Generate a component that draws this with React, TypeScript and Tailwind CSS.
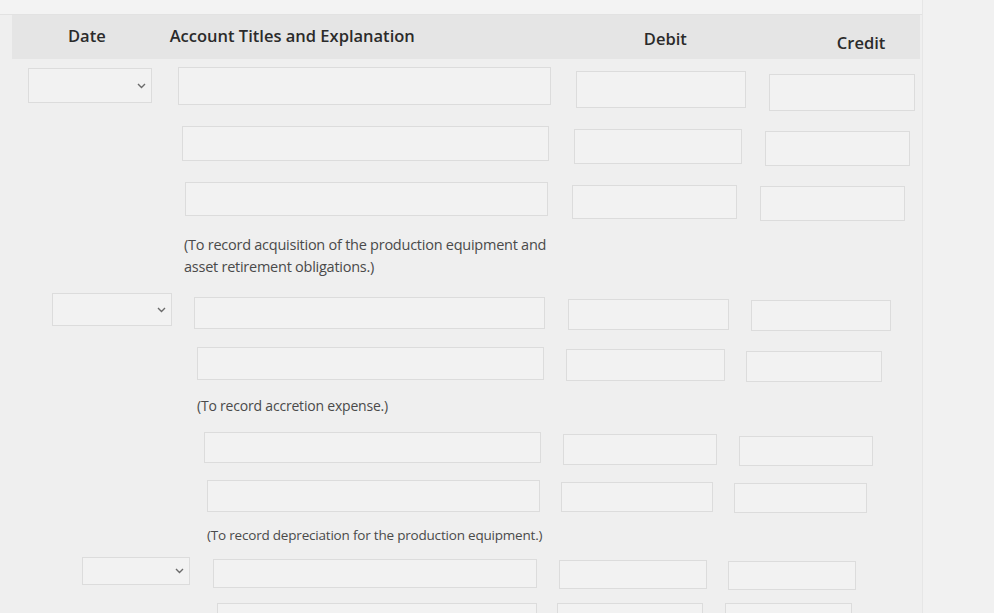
import React from "react";

const box = "border border-[#dcdcdc] bg-[#f2f2f2] shrink-0";

function Chevron() {
  return (
    <svg width="9" height="6" viewBox="0 0 9 6" className="shrink-0">
      <path d="M1 1 L4.5 4.5 L8 1" fill="none" stroke="#6b6b6b" strokeWidth="1.4" />
    </svg>
  );
}

export default function App() {
  return (
    <div
      className="w-[994px] h-[613px] overflow-hidden bg-[#efefef] relative"
      style={{ fontFamily: '"Open Sans", "Liberation Sans", sans-serif' }}
    >
      <div className="flex">
        <div className="w-[922px] shrink-0">
          {/* top strip */}
          <div className="h-[15px] bg-[#f3f3f3] border-b border-[#e2e2e2]" />
          {/* header bar */}
          <div className="ml-[12px] w-[908px] h-[44px] bg-[#e5e5e5] flex items-start text-[16.5px] font-semibold text-[#2b2b2b]">
            <div className="ml-[56px] mt-[9px]">Date</div>
            <div className="ml-[64px] mt-[9px]">Account Titles and Explanation</div>
            <div className="ml-[229px] mt-[12px]">Debit</div>
            <div className="ml-[150px] mt-[16px]">Credit</div>
          </div>

          {/* Row 1 */}
          <div className="flex items-start mt-[8px]">
            <div className={`${box} ml-[28px] w-[124px] h-[35px] mt-[1px] flex items-center justify-end pr-[5px]`}>
              <Chevron />
            </div>
            <div className={`${box} ml-[26px] w-[373px] h-[38px]`} />
            <div className={`${box} ml-[25px] w-[170px] h-[37px] mt-[4px]`} />
            <div className={`${box} ml-[23px] w-[146px] h-[37px] mt-[7px]`} />
          </div>

          {/* Row 2 */}
          <div className="flex items-start mt-[15px]">
            <div className={`${box} ml-[182px] w-[367px] h-[35px]`} />
            <div className={`${box} ml-[25px] w-[168px] h-[35px] mt-[3px]`} />
            <div className={`${box} ml-[23px] w-[145px] h-[35px] mt-[5px]`} />
          </div>

          {/* Row 3 */}
          <div className="flex items-start mt-[16px]">
            <div className={`${box} ml-[185px] w-[363px] h-[34px]`} />
            <div className={`${box} ml-[24px] w-[165px] h-[34px] mt-[3px]`} />
            <div className={`${box} ml-[23px] w-[145px] h-[35px] mt-[4px]`} />
          </div>

          <div className="ml-[184px] mt-[13px] w-[380px] text-[14.5px] leading-[22px] text-[#4a4a4a] tracking-[-0.25px]">
            (To record acquisition of the production equipment and
            <br />
            asset retirement obligations.)
          </div>

          {/* Row 4 */}
          <div className="flex items-start mt-[15px]">
            <div className={`${box} ml-[52px] w-[120px] h-[33px] flex items-center justify-end pr-[5px]`}>
              <Chevron />
            </div>
            <div className={`${box} ml-[22px] w-[351px] h-[32px] mt-[4px]`} />
            <div className={`${box} ml-[23px] w-[161px] h-[31px] mt-[6px]`} />
            <div className={`${box} ml-[22px] w-[140px] h-[31px] mt-[7px]`} />
          </div>

          {/* Row 5 */}
          <div className="flex items-start mt-[16px]">
            <div className={`${box} ml-[197px] w-[347px] h-[33px]`} />
            <div className={`${box} ml-[22px] w-[159px] h-[32px] mt-[2px]`} />
            <div className={`${box} ml-[21px] w-[136px] h-[31px] mt-[4px]`} />
          </div>

          <div className="ml-[197px] mt-[13px] text-[14px] leading-[22px] text-[#4a4a4a] tracking-[-0.2px]">
            (To record accretion expense.)
          </div>

          {/* Row 6 */}
          <div className="flex items-start mt-[15px]">
            <div className={`${box} ml-[204px] w-[337px] h-[31px]`} />
            <div className={`${box} ml-[22px] w-[154px] h-[31px] mt-[2px]`} />
            <div className={`${box} ml-[22px] w-[134px] h-[30px] mt-[4px]`} />
          </div>

          {/* Row 7 */}
          <div className="flex items-start mt-[14px]">
            <div className={`${box} ml-[207px] w-[333px] h-[32px]`} />
            <div className={`${box} ml-[21px] w-[152px] h-[30px] mt-[2px]`} />
            <div className={`${box} ml-[21px] w-[133px] h-[30px] mt-[3px]`} />
          </div>

          <div className="ml-[207px] mt-[11px] text-[13.5px] leading-[22px] text-[#4a4a4a] tracking-[-0.2px]">
            (To record depreciation for the production equipment.)
          </div>

          {/* Row 8 */}
          <div className="flex items-start mt-[11px]">
            <div className={`${box} ml-[82px] w-[108px] h-[28px] flex items-center justify-end pr-[5px]`}>
              <Chevron />
            </div>
            <div className={`${box} ml-[23px] w-[324px] h-[29px] mt-[2px]`} />
            <div className={`${box} ml-[22px] w-[148px] h-[29px] mt-[3px]`} />
            <div className={`${box} ml-[21px] w-[128px] h-[29px] mt-[4px]`} />
          </div>

          {/* Row 9 (partial) */}
          <div className="flex items-start mt-[13px]">
            <div className={`${box} ml-[217px] w-[320px] h-[30px]`} />
            <div className={`${box} ml-[20px] w-[146px] h-[30px]`} />
            <div className={`${box} ml-[22px] w-[127px] h-[30px]`} />
          </div>
        </div>
        <div className="flex-1 bg-[#f1f1f1] border-l border-[#e6e6e6] h-[613px]" />
      </div>
    </div>
  );
}
